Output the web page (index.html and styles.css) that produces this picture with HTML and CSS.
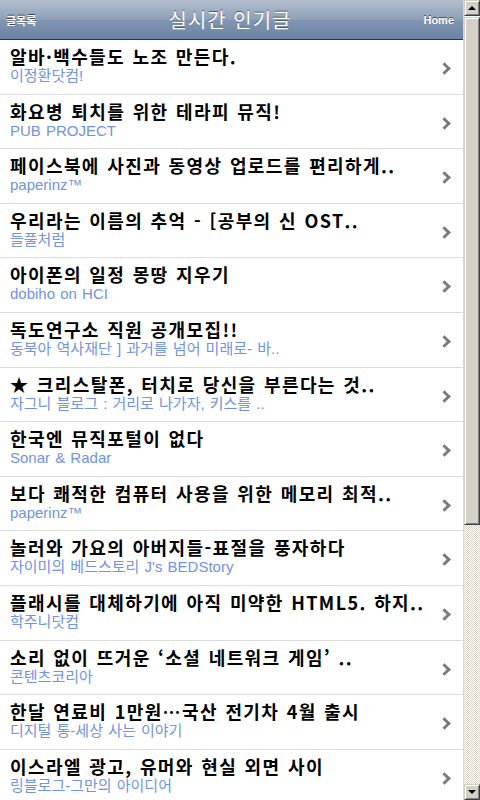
FILE: index.html
```html
<!DOCTYPE html>
<html lang="ko">
<head>
    <meta charset="UTF-8">
    <meta name="viewport" content="width=device-width, initial-scale=1.0">
    <title>실시간 인기글</title>
    <link rel="stylesheet" href="styles.css">
</head>
<body>
    <div class="screen">
        <div class="page">
            <div class="topbar">
                <a class="topbar-left" href="#">글목록</a>
                <h1>실시간 인기글</h1>
                <a class="topbar-right" href="#">Home</a>
            </div>
            <ul class="post-list">
                <li><div class="post-text"><h2>알바·백수들도 노조 만든다.</h2><p>이정환닷컴!</p></div><span class="chev"></span></li>
                <li><div class="post-text"><h2>화요병 퇴치를 위한 테라피 뮤직!</h2><p>PUB PROJECT</p></div><span class="chev"></span></li>
                <li><div class="post-text"><h2>페이스북에 사진과 동영상 업로드를 편리하게..</h2><p>paperinz™</p></div><span class="chev"></span></li>
                <li><div class="post-text"><h2>우리라는 이름의 추억 - [공부의 신 OST..</h2><p>들풀처럼</p></div><span class="chev"></span></li>
                <li><div class="post-text"><h2>아이폰의 일정 몽땅 지우기</h2><p>dobiho on HCI</p></div><span class="chev"></span></li>
                <li><div class="post-text"><h2>독도연구소 직원 공개모집!!</h2><p>동북아 역사재단 ] 과거를 넘어 미래로- 바..</p></div><span class="chev"></span></li>
                <li><div class="post-text"><h2>★ 크리스탈폰, 터치로 당신을 부른다는 것..</h2><p>자그니 블로그 : 거리로 나가자, 키스를 ..</p></div><span class="chev"></span></li>
                <li><div class="post-text"><h2>한국엔 뮤직포털이 없다</h2><p>Sonar &amp; Radar</p></div><span class="chev"></span></li>
                <li><div class="post-text"><h2>보다 쾌적한 컴퓨터 사용을 위한 메모리 최적..</h2><p>paperinz™</p></div><span class="chev"></span></li>
                <li><div class="post-text"><h2>놀러와 가요의 아버지들-표절을 풍자하다</h2><p>자이미의 베드스토리 J's BEDStory</p></div><span class="chev"></span></li>
                <li><div class="post-text"><h2>플래시를 대체하기에 아직 미약한 HTML5. 하지..</h2><p>학주니닷컴</p></div><span class="chev"></span></li>
                <li><div class="post-text"><h2>소리 없이 뜨거운 ‘소셜 네트워크 게임’ ..</h2><p>콘텐츠코리아</p></div><span class="chev"></span></li>
                <li><div class="post-text"><h2>한달 연료비 1만원…국산 전기차 4월 출시</h2><p>디지털 통-세상 사는 이야기</p></div><span class="chev"></span></li>
                <li><div class="post-text"><h2>이스라엘 광고, 유머와 현실 외면 사이</h2><p>링블로그-그만의 아이디어</p></div><span class="chev"></span></li>
            </ul>
        </div>
        <div class="scrollbar">
            <div class="sb-btn"><span class="arrow-up"></span></div>
            <div class="sb-thumb"></div>
            <div class="sb-track"></div>
            <div class="sb-btn"><span class="arrow-down"></span></div>
        </div>
    </div>
</body>
</html>
```

FILE: styles.css
```css
html, body {
    margin: 0;
    padding: 0;
    height: 100%;
    overflow: hidden;
    background-color: #fff;
}
body {
    font-family: "Liberation Sans", "Noto Sans CJK KR", sans-serif;
}
.screen {
    display: flex;
    height: 800px;
    width: 480px;
}
.page {
    width: 464px;
    overflow: hidden;
    border-right: 1px solid #d6d6d6;
    box-sizing: border-box;
}
.topbar {
    height: 39px;
    border-bottom: 1px solid #2d3642;
    background: linear-gradient(#b3bfcf, #8d9fb7 50%, #8196b1 51%, #6c83a2);
    display: grid;
    grid-template-columns: 1fr auto 1fr;
    align-items: center;
    padding: 0 9px 0 6px;
}
.topbar h1 {
    margin: 0;
    color: #fff;
    font-family: "Noto Sans CJK KR", sans-serif;
    font-weight: 400;
    font-size: 20px;
    letter-spacing: 1px;
    line-height: 22px;
    text-shadow: 0 -1px 0 #4a5a72;
    padding-top: 1px;
}
.topbar a {
    color: #fff;
    text-decoration: none;
    font-size: 11px;
    font-weight: 700;
    text-shadow: 0 -1px 0 #3c4a60;
}
.topbar-left {
    font-family: "Noto Sans CJK KR", sans-serif;
    font-size: 12px;
    justify-self: start;
}
.topbar-right {
    justify-self: end;
    font-family: "Liberation Sans", sans-serif;
}
.post-list {
    list-style: none;
    margin: 0;
    padding: 0;
}
.post-list li {
    height: 54.6px;
    box-sizing: border-box;
    border-bottom: 1px solid #dcdcdc;
    display: flex;
    align-items: flex-start;
    padding: 6px 12px 0 10px;
}
.post-text {
    flex: 1;
    min-width: 0;
}
.post-text h2 {
    margin: 0;
    font-family: "Noto Sans CJK KR", sans-serif;
    font-size: 18px;
    font-weight: 700;
    letter-spacing: 1.4px;
    word-spacing: 1px;
    line-height: 21px;
    color: #000;
    white-space: nowrap;
}
.post-text p {
    margin: 0;
    font-family: "Liberation Sans", "Noto Sans CJK KR", sans-serif;
    font-size: 15px;
    word-spacing: 1px;
    line-height: 17px;
    color: #6f93e6;
    white-space: nowrap;
}
.chev {
    width: 6px;
    height: 6px;
    border-top: 3px solid #7b7b7b;
    border-right: 3px solid #7b7b7b;
    transform: rotate(45deg);
    margin: 18px 2px 0 8px;
}
.scrollbar {
    width: 16px;
    display: flex;
    flex-direction: column;
}
.sb-btn, .sb-thumb {
    background-color: #d4d0c8;
    box-sizing: border-box;
    border-top: 1px solid #d4d0c8;
    border-left: 1px solid #d4d0c8;
    border-right: 1px solid #404040;
    border-bottom: 1px solid #404040;
    box-shadow: inset 1px 1px 0 #fff, inset -1px -1px 0 #808080;
}
.sb-btn {
    height: 16px;
    display: flex;
    align-items: center;
    justify-content: center;
}
.sb-thumb {
    height: 508px;
    margin-top: 1px;
}
.sb-track {
    flex: 1;
    background-color: #fff;
    background-image: repeating-conic-gradient(#d4d0c8 0 25%, #fff 0 50%);
    background-size: 2px 2px;
}
.arrow-up, .arrow-down {
    width: 0;
    height: 0;
    border-left: 4px solid transparent;
    border-right: 4px solid transparent;
}
.arrow-up {
    border-bottom: 4px solid #000;
}
.arrow-down {
    border-top: 4px solid #000;
}
```
